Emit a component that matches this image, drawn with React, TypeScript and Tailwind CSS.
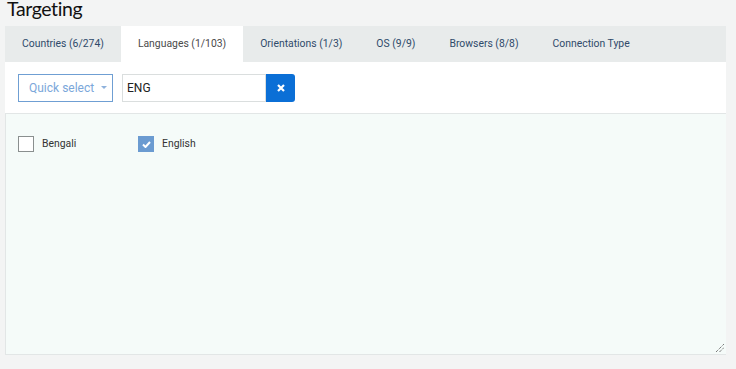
import React from "react";

const tabs = [
  { label: "Countries (6/274)", active: false },
  { label: "Languages (1/103)", active: true },
  { label: "Orientations (1/3)", active: false },
  { label: "OS (9/9)", active: false },
  { label: "Browsers (8/8)", active: false },
  { label: "Connection Type", active: false },
];

export default function App() {
  return (
    <div className="w-[736px] h-[369px] bg-[#f3f4f4] overflow-hidden" style={{ fontFamily: "Roboto, 'Liberation Sans', sans-serif" }}>
      <div className="h-[26px] pl-[7px] flex items-start">
        <h1 className="text-[19.5px] leading-[18px] tracking-[-0.4px] text-[#111]" style={{ fontFamily: "Lato, 'Liberation Sans', sans-serif" }}>
          Targeting
        </h1>
      </div>
      <div className="ml-[5px] w-[721px] flex flex-col">
        <div className="h-[36px] bg-[#e8ebeb] flex">
          {tabs.map((t) => (
            <div
              key={t.label}
              className={`h-full px-[17px] flex items-center text-[10.4px] ${t.active ? "bg-white text-[#4a4a4a]" : "text-[#2f4a6a]"}`}
            >
              {t.label}
            </div>
          ))}
        </div>
        <div className="h-[52px] bg-white border-b border-[#e2e6e6] flex items-center pl-[13px]">
          <button className="h-[28px] w-[95px] border border-[#6f9fd3] text-[#7ba7da] text-[12px] flex items-center pl-[10px] gap-[7px]">
            Quick select
            <svg width="6" height="4" viewBox="0 0 6 4"><path d="M0 0 L6 0 L3 3 Z" fill="#8fb2dc" /></svg>
          </button>
          <div className="ml-[9px] flex h-[28px]">
            <div className="w-[144px] border border-[#dadede] flex items-center pl-[4px] text-[12px] text-[#222]">ENG</div>
            <div className="w-[29px] bg-[#0b6fd6] rounded-r-[3px] flex items-center justify-center">
              <svg width="8" height="8" viewBox="0 0 8 8"><path d="M1 1 L7 7 M7 1 L1 7" stroke="white" strokeWidth="2.2" /></svg>
            </div>
          </div>
        </div>
        <div className="relative h-[241px] bg-[#f5fbf9] border-b border-l border-[#e2e6e6] flex items-start pt-[22px] pl-[12px]">
          <label className="flex items-center w-[120px]">
            <span className="w-[16px] h-[16px] border border-[#8a8f8f] bg-white" />
            <span className="ml-[8px] text-[10.4px] text-[#333]">Bengali</span>
          </label>
          <label className="flex items-center">
            <span className="w-[16px] h-[16px] bg-[#6b9bd1] flex items-center justify-center">
              <svg width="9" height="7" viewBox="0 0 9 7"><path d="M1 3.5 L3.5 6 L8 1" stroke="white" strokeWidth="2" fill="none" /></svg>
            </span>
            <span className="ml-[8px] text-[10.4px] text-[#333]">English</span>
          </label>
          <svg className="absolute right-[1px] bottom-[1px]" width="10" height="10" viewBox="0 0 10 10">
            <path d="M1 9 L9 1 M4.5 9 L9 4.5" stroke="#444" strokeWidth="1" strokeDasharray="1 1" />
          </svg>
        </div>
      </div>
    </div>
  );
}
